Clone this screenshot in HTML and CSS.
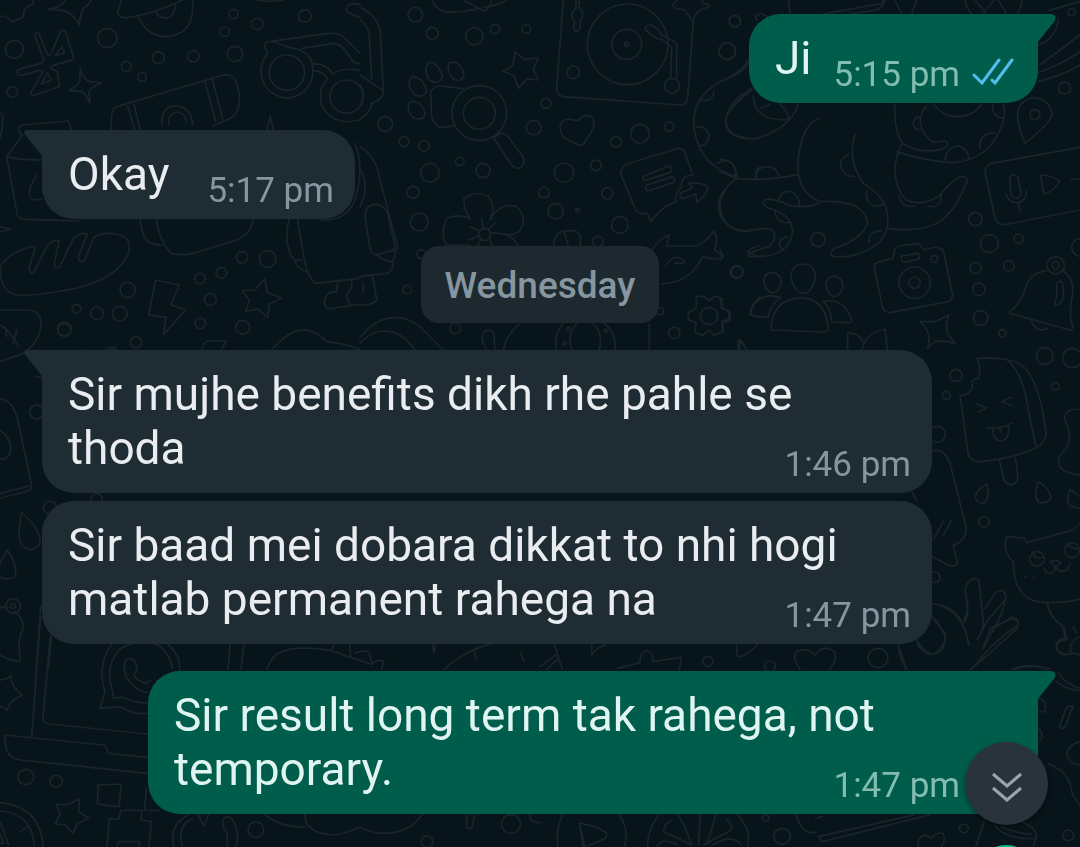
FILE: index.html
```html
<!DOCTYPE html>
<html lang="en">
<head>
<meta charset="utf-8">
<meta name="viewport" content="width=device-width, initial-scale=1">
<title>Chat</title>
<link rel="stylesheet" href="styles.css">
</head>
<body>
<svg class="wallpaper" viewBox="0 0 1080 847" preserveAspectRatio="xMinYMin slice" aria-hidden="true">
  <!-- top left -->
  <g transform="scale(.3333)">
    <path d="M0 52Q14 44 20 52Q36 72 48 60L72 50Q68 28 82 20L100 12V0M145 28Q190 20 196 0M145 28Q200 28 215 45Q232 60 238 75Q240 30 262 15L275 0M365 0L353 35Q355 55 380 53Q450 45 548 0M415 50Q440 110 500 110Q575 105 578 25V0M468 38Q480 56 500 54Q525 50 526 15M770 0Q820 8 850 0M1080 14Q1045 6 1038 26Q1040 40 1080 52"/>
    <path d="M115 97L143 163Q150 170 155 158L180 97Q190 85 197 95L220 170Q222 182 208 182L158 197Q148 202 158 208L172 215L178 258Q176 264 165 264L103 286Q90 287 94 275L128 216Q128 208 115 212L66 226Q50 226 52 213L60 207L120 190Q135 186 130 176L105 107Q104 95 115 97ZM187 140L193 160L166 166ZM142 218L153 240L124 252ZM241 207Q250 240 268 244L306 249Q270 263 267 275L270 309Q255 275 241 274L206 272Q235 255 239 246Z"/>
    <circle cx="43" cy="148" r="27"/><circle cx="322" cy="114" r="29"/><circle cx="700" cy="42" r="14"/><circle cx="772" cy="72" r="17"/><circle cx="674" cy="95" r="14"/><circle cx="915" cy="48" r="19"/><circle cx="705" cy="162" r="23"/><circle cx="580" cy="169" r="17"/><circle cx="475" cy="173" r="18"/><circle cx="379" cy="199" r="15"/><circle cx="426" cy="231" r="13"/><circle cx="37" cy="276" r="16"/>
    <path d="M335 391Q330 325 350 320L660 228Q700 215 712 255Q730 320 700 350L640 378M383 318L405 391M402 312L421 391M614 244L648 366M637 238L668 357M487 375Q480 318 530 317Q575 325 578 375M507 375Q502 340 532 336Q560 340 558 368M800 391L811 350L820 391"/>
    <circle cx="861" cy="218" r="53"/><path d="M803 160L795 143Q790 128 805 125L985 100Q1020 98 1035 115L1080 160M905 145L1000 130Q1015 130 1030 145L1060 185L1080 192M803 160A78 80 0 1 0 937 195Q930 150 870 143L818 124M937 192Q980 190 998 222M938 212Q965 210 984 238M998 222Q1030 200 1080 212M984 238Q955 260 964 310Q980 360 1040 366L1080 360"/><circle cx="1040" cy="290" r="50"/>
    <path d="M0 340L8 342Q8 390 0 415M62 405L55 383L65 375L205 363L214 391M68 405L20 470L52 645Q58 658 75 658L240 663M20 470Q60 480 125 480M110 525Q80 575 90 590Q100 605 125 598M0 680L30 688L0 696"/>
    <path d="M0 800Q25 760 85 742Q105 735 105 745L87 805Q90 825 103 815L140 740Q150 722 178 720L163 790Q165 810 180 800L220 715Q240 697 262 702L235 770Q240 795 255 780L280 715Q300 695 345 702Q400 710 385 760Q360 830 230 865Q100 890 50 885Q0 875 0 800M420 655Q425 700 440 722Q455 735 485 735M468 655Q480 730 515 760Q540 768 580 760L710 720Q755 700 760 655M868 655Q850 720 875 770Q885 785 905 780M892 655L915 790Q925 830 945 850L1080 835M885 778Q885 805 920 815M980 884Q1000 870 1010 878Q1010 845 1020 840M980 884Q970 900 975 917Q985 930 1000 925L1080 912M1055 840Q1058 870 1045 875Q1035 900 1055 915M1065 430Q1095 500 1065 600Q1040 665 960 660"/>
    <circle cx="726" cy="772" r="17"/><circle cx="803" cy="777" r="25"/><circle cx="664" cy="819" r="16"/><circle cx="600" cy="836" r="16"/><circle cx="383" cy="870" r="23"/><circle cx="631" cy="898" r="18"/><circle cx="229" cy="926" r="13"/><circle cx="291" cy="940" r="19"/><circle cx="359" cy="941" r="22"/><circle cx="193" cy="987" r="21"/><circle cx="601" cy="970" r="16"/><circle cx="728" cy="982" r="21"/><circle cx="408" cy="1027" r="17"/>
    <path d="M467 840L538 855L513 914L557 931L490 1004L498 952L446 945ZM794 837L802 877L845 895L808 912L803 952L773 927L738 934L748 900L727 872L765 870ZM0 930H90Q130 940 122 985Q110 1040 60 1064L0 1085M0 975Q30 990 55 1040M20 1010L15 980M40 1030L50 990M605 1050Q610 1025 625 1023H678L665 1050M815 1050Q870 985 920 990Q960 1000 980 1025Q1040 1030 1080 1050M240 1050Q300 1080 345 1040"/>
  </g>
  <!-- top centre -->
  <g transform="translate(360 0) scale(.3333)">
    <path d="M0 22Q60 50 62 110L70 280Q65 300 45 305L35 310Q35 335 0 358M0 60Q25 75 28 110L35 240M0 225L70 272M0 255Q20 285 0 315M215 0Q230 30 255 35Q310 40 355 25M310 0L370 33Q390 30 395 0M370 22Q420 15 440 0M610 0L590 265Q590 285 610 290L960 315Q980 315 983 295L1000 65M640 85L650 95L660 85V65L668 50V35L658 25V5H648V25L636 38V52L645 65ZM952 0L940 12Q935 22 950 26L975 30L998 65Q1005 40 1020 30L1048 20Q1048 12 1030 10L1025 0M858 92Q850 75 875 75Q895 85 905 105L945 125Q953 130 950 145V235M860 92Q880 115 910 120L935 143L932 238"/>
    <circle cx="803" cy="133" r="121"/><circle cx="800" cy="133" r="45"/><circle cx="800" cy="133" r="6"/><circle cx="936" cy="257" r="22"/><circle cx="640" cy="217" r="19"/><circle cx="166" cy="44" r="22"/><circle cx="217" cy="100" r="18"/><circle cx="343" cy="109" r="26"/><circle cx="405" cy="87" r="14"/><circle cx="499" cy="87" r="13"/><circle cx="1125" cy="63" r="17"/><circle cx="1102" cy="153" r="25"/>
    <path d="M465 155L493 178L535 174L520 208L535 240L500 237L475 265L463 228L428 213L458 198ZM205 188Q225 180 245 220Q250 245 225 247Q200 245 197 205ZM270 188Q300 178 312 225Q305 250 280 237Q255 205 270 188ZM155 230Q190 230 200 275Q190 295 165 285Q135 255 155 230ZM150 305Q185 300 195 340Q190 365 160 353Q135 330 150 305ZM310 265L235 258Q212 262 212 285L215 350Q225 385 255 382L280 376M405 420L455 495Q470 512 485 500Q500 485 485 465L440 405Q425 395 410 407Q400 410 405 420M600 380Q605 355 630 358Q645 360 655 362Q670 340 695 350Q710 370 695 395L670 432Q660 440 645 430L615 415Q600 400 600 380Z"/>
    <circle cx="358" cy="339" r="82"/><circle cx="358" cy="340" r="48"/><circle cx="76" cy="372" r="22"/><circle cx="132" cy="425" r="15"/><circle cx="192" cy="438" r="16"/><circle cx="299" cy="484" r="13"/><circle cx="210" cy="518" r="28"/><circle cx="369" cy="512" r="21"/><circle cx="521" cy="383" r="22"/><circle cx="558" cy="310" r="15"/><circle cx="612" cy="518" r="29"/><circle cx="708" cy="496" r="16"/><circle cx="768" cy="425" r="16"/><circle cx="840" cy="401" r="28"/><circle cx="927" cy="380" r="14"/><circle cx="159" cy="577" r="18"/><circle cx="178" cy="666" r="27"/><circle cx="552" cy="578" r="16"/><circle cx="587" cy="634" r="23"/><circle cx="652" cy="630" r="5"/><circle cx="742" cy="580" r="17"/><circle cx="780" cy="675" r="25"/><circle cx="714" cy="725" r="16"/><circle cx="183" cy="762" r="13"/><circle cx="142" cy="869" r="13"/><circle cx="285" cy="985" r="16"/><circle cx="1131" cy="816" r="17"/><circle cx="943" cy="999" r="17"/><circle cx="900" cy="934" r="11"/>
    <path d="M330 655Q310 630 312 595Q350 570 385 588Q410 620 390 660Q420 605 470 620Q505 655 480 690Q460 710 430 702Q460 710 475 738M330 655Q290 640 260 655Q240 700 258 735H330M365 655L370 685M330 680L358 693M325 720L355 708M350 740L365 718M398 740L388 715M430 702L392 698M405 670L385 688"/><circle cx="374" cy="703" r="18"/>
    <path d="M782 520Q785 500 800 492L955 445Q970 445 976 460L998 525L975 530Q962 545 965 560Q945 580 948 605Q905 620 873 664L863 640Q835 645 825 625ZM853 528L928 498Q942 505 930 518L855 542Q842 538 853 528ZM860 555L938 530Q952 540 938 548L868 572Q850 570 860 555ZM962 580L998 563L985 550Q1015 545 1046 560Q1040 585 1010 608L1008 582L970 596Q955 592 962 580Z"/>
    <path d="M1170 170Q1165 215 1090 240Q990 290 1003 390Q1020 500 1130 530M1020 300Q1060 310 1062 270M1010 380Q1045 380 1047 410Q1040 440 1018 437M1070 490Q1120 465 1130 525M1130 535Q1060 585 1080 645Q1100 690 1170 695M1175 270Q1110 320 1098 355Q1090 410 1170 415M1195 540Q1180 530 1195 500"/>
    <path d="M875 750Q900 715 927 705Q925 725 920 738H1010Q1030 735 1062 693Q1075 710 1065 750L1090 770Q1060 785 1030 768Q990 850 905 852M918 795Q945 755 975 785Q965 795 945 788M582 738Q580 690 630 692Q670 690 660 738M612 695L625 738M0 440Q50 470 60 540L113 740Q110 755 103 750Q110 770 95 785Q70 785 48 760M0 505Q30 560 0 620M15 650Q15 615 45 613Q75 615 82 640L105 740Q100 755 80 755L50 765Q35 765 30 745ZM100 785Q100 815 80 820L0 830M38 830L50 900Q45 910 30 912L0 916M10 850V875M0 1012Q50 950 110 953Q150 955 180 980L250 1050M0 1030Q40 985 90 995Q130 1000 165 1050M370 1000Q385 980 402 1000L405 1050M370 1000Q360 1025 382 1050M430 1050Q440 1000 480 972M590 1050Q580 1000 610 972M735 972Q770 1000 765 1050M635 1050Q620 1000 650 972M700 972Q730 1000 718 1050M868 972V1050M1163 755Q1180 740 1200 738M1163 755L1200 772M1170 945Q1170 915 1200 892M1170 945L1200 952M1135 1050V1020Q1145 1015 1160 1050"/>
    <path d="M1010 905L1008 890L1030 888L1048 902L1065 888L1088 895L1085 922L1107 935V957L1086 965L1088 995L1062 1006L1047 990L1028 1007L1005 997L1008 968L985 958V938L1008 925Z"/><circle cx="1047" cy="948" r="26"/><circle cx="625" cy="987" r="5"/><circle cx="737" cy="992" r="5"/><circle cx="614" cy="1030" r="5"/>
  </g>
  <!-- top right -->
  <g transform="translate(720 0) scale(.3333)">
    <path d="M205 0L210 42M310 42L485 10L490 0M390 42L470 30Q490 20 495 0M525 0L545 42M590 0L575 42M735 0Q740 25 755 42M765 0L800 42M785 42L825 0M835 0L860 42M905 0Q905 25 890 42M985 32L1080 5M1015 55Q1010 115 955 135M950 220Q1030 190 1080 155M955 245Q1030 225 1080 195M960 195L1080 105M0 245Q70 215 83 180M110 60Q100 45 125 40L145 52M95 265Q20 310 17 365Q30 420 100 417Q210 390 235 312M100 285Q100 360 195 360L208 355Q200 330 180 312M120 325Q140 320 150 312"/>
    <path d="M298 355Q245 375 235 475Q225 575 300 605Q280 625 215 618Q150 590 135 600Q120 610 145 625Q210 640 218 690Q215 755 140 768L90 770Q75 765 100 755L145 740Q175 720 158 690Q140 680 70 695Q0 685 0 610Q10 560 50 535M50 535L0 515M50 535Q120 545 235 524M105 535Q110 500 140 500Q170 500 177 528M0 478Q50 480 47 530M175 600Q185 570 215 575Q240 590 238 618M165 635Q165 670 215 668M205 710Q175 715 178 735L185 748M300 605Q350 600 400 615Q445 640 442 670Q430 715 345 745Q320 765 345 770Q420 775 480 725Q510 690 502 640Q495 590 430 550Q380 480 405 402M385 465Q360 475 362 500Q370 530 405 530M440 570Q435 610 465 618Q480 620 490 612M448 728Q440 695 485 692M502 685Q600 700 660 665Q700 635 720 590L742 545Q740 525 720 530Q690 545 655 590Q600 620 560 600Q525 570 525 500Q530 460 548 430Q520 390 525 312M537 585Q540 625 585 618M627 618Q660 630 665 582M530 455Q620 485 700 488Q800 480 840 390Q860 350 850 312M675 480Q680 440 715 438Q745 445 748 480M548 430Q590 460 660 450Q690 440 680 425Q670 420 640 428Q605 405 600 360Q605 330 620 318M603 350Q580 350 580 375Q585 390 605 390M640 312Q670 350 710 350Q760 350 785 312M780 445Q775 400 825 398M818 312Q815 350 848 355"/>
    <path d="M915 430Q890 370 893 335Q905 295 945 293Q990 300 997 345Q985 375 915 430ZM1080 442L815 490Q792 500 796 520L825 655Q832 675 855 674L1080 630M870 530Q880 520 893 530L903 580Q900 595 890 595Q875 592 872 580ZM858 580Q865 610 895 608Q920 600 920 572M895 608L900 634M962 525Q995 525 1020 545Q1000 575 972 583ZM1052 537H1080"/>
    <circle cx="945" cy="344" r="15"/><circle cx="1055" cy="37" r="11"/><circle cx="44" cy="64" r="17"/><circle cx="22" cy="154" r="25"/><circle cx="1034" cy="264" r="18"/><circle cx="294" cy="719" r="21"/><circle cx="766" cy="657" r="20"/><circle cx="808" cy="731" r="27"/><circle cx="896" cy="716" r="14"/><circle cx="867" cy="798" r="16"/><circle cx="767" cy="804" r="17"/><circle cx="777" cy="868" r="19"/><circle cx="782" cy="954" r="22"/><circle cx="847" cy="1000" r="11"/><circle cx="1082" cy="742" r="27"/><circle cx="50" cy="816" r="19"/><circle cx="1007" cy="796" r="26"/><circle cx="1007" cy="796" r="11"/>
    <path d="M463 800Q465 788 480 785L520 775Q522 740 535 738L595 730L612 750Q650 735 670 750L698 885Q698 900 685 905L510 938Q490 935 487 920ZM545 768L595 760Q602 770 595 777L553 787Q543 785 545 768Z"/><circle cx="584" cy="848" r="47"/><circle cx="584" cy="848" r="17"/><circle cx="643" cy="777" r="10"/>
    <path d="M213 830Q215 792 250 792Q288 795 286 835Q275 880 248 880Q220 875 213 830ZM131 845Q132 817 158 817Q185 822 184 850Q175 880 155 878Q135 870 131 845ZM317 855Q320 830 345 828Q370 835 368 862Q360 890 342 890Q325 885 317 855ZM153 990Q155 900 240 893Q320 895 325 990Q320 998 300 996L165 990ZM92 940Q100 895 150 887L182 892Q150 915 145 952L98 948ZM310 905Q370 890 395 960Q395 970 380 968L335 966Q335 930 310 905M600 965L645 965L687 945Q670 985 690 1010L705 1030Q670 1020 645 1025L622 1045Q640 1000 600 965ZM383 1050V998Q420 1000 432 1030Q450 995 495 987L502 1050M432 1030L425 1050M980 812Q925 820 915 870Q900 915 868 935Q870 945 880 943L1050 990Q1060 990 1058 975Q1045 960 1058 880Q1060 825 1025 812M1010 850Q1028 830 1030 870Q1035 910 1010 915Q1000 915 1010 890ZM935 965Q950 1000 985 985M0 895L5 925L30 935V960L8 970V1000M0 750L10 770L0 780M60 1050V1020L80 1050"/>
  </g>
  <!-- right side -->
  <g transform="translate(900 330) scale(.3333)">
    <path d="M230 85Q245 105 235 145Q210 145 218 170Q210 195 180 197L205 375Q215 395 240 395Q340 385 405 355Q440 335 438 310Q420 150 365 105Q330 80 230 85ZM320 88Q370 130 385 240L408 350M298 390L312 450Q330 475 350 455Q358 440 345 382M230 222L260 233L235 246M332 202L305 215L335 227M258 292L275 295Q310 295 335 280M278 297Q280 335 305 333Q330 325 325 290M300 297L303 308M260 462Q235 475 225 500Q230 520 250 520Q270 510 262 465ZM415 455Q400 500 415 515Q430 525 450 510Q460 485 415 455ZM510 478Q495 520 515 530L540 535M510 478L540 500M540 240Q500 230 493 265Q520 320 500 355Q465 385 480 410Q490 430 540 435"/>
    <circle cx="168" cy="136" r="18"/><circle cx="139" cy="196" r="12"/><circle cx="112" cy="313" r="24"/><circle cx="434" cy="78" r="25"/><circle cx="517" cy="84" r="29"/><circle cx="467" cy="169" r="11"/><circle cx="252" cy="575" r="16"/><circle cx="307" cy="10" r="11"/><circle cx="104" cy="742" r="16"/>
    <path d="M97 362Q135 355 150 400L198 590Q200 635 160 645L172 700Q165 712 150 708L97 680M100 628L130 575M130 618L153 572M50 512L35 485M520 600L380 638L375 625L320 620Q305 665 340 695Q340 790 400 812Q450 825 540 808M520 600L540 580M440 820Q450 860 490 890L495 925Q460 930 472 960Q485 985 515 968L540 975M520 890L530 910M540 920Q500 940 515 968M375 740H377M397 741H399M453 695L470 690L482 700L466 712ZM466 712Q462 735 440 730L432 715M466 712Q480 730 500 720L512 700M400 670Q405 690 428 682M505 640Q510 660 535 655"/><circle cx="411" cy="687" r="22"/><circle cx="516" cy="661" r="22"/>
    <path d="M97 820Q190 840 207 945M97 860L135 910Q140 970 95 972Q70 965 50 930M195 878Q205 850 203 830L195 780Q205 740 235 748L240 780L250 880Q245 910 232 928M255 835L285 790Q310 770 318 800Q310 850 280 900L250 955M282 895L335 862Q360 865 353 885Q290 930 255 970L215 1018M0 960L20 1018M340 1018Q400 1000 450 1018M475 1030Q500 1065 540 1075M350 1140L340 1160"/>
  </g>
  <!-- left side -->
  <g transform="translate(0 330) scale(.3333)">
    <path d="M0 205Q40 215 52 265L95 465Q95 480 80 484L0 505M0 490L88 468M0 300Q40 330 30 370Q20 390 0 387M65 548Q50 620 65 645Q95 675 120 640Q125 600 65 548ZM22 660Q-15 715 0 740Q20 755 45 740Q55 710 22 660M0 832H25M45 845Q75 870 68 900Q50 930 62 992Q40 998 0 975M122 830L108 1020M155 915L145 1020"/>
    <circle cx="39" cy="828" r="22"/><circle cx="39" cy="828" r="7"/><circle cx="110" cy="246" r="21"/><circle cx="150" cy="532" r="19"/><circle cx="193" cy="0" r="19"/><circle cx="290" cy="508" r="17"/><path d="M315 60Q330 45 350 60M105 138L125 145"/>
  </g>
  <!-- bottom left -->
  <g transform="translate(0 600) scale(.3444 .3333)">
    <path d="M118 50L92 410M146 110L125 350Q125 370 142 372L428 402M15 405L300 435Q310 440 315 460L428 472M15 405Q10 475 60 480L428 520M0 240Q30 235 32 225Q30 260 65 285Q30 300 20 330L0 318M290 325L305 275Q280 200 325 130M290 325L350 320Q385 345 428 340M485 130Q525 165 522 210M330 295L325 265Q305 200 345 150Q400 110 460 135Q495 165 500 205M330 295L355 292Q390 310 428 308M365 180Q380 170 393 185L398 210L388 225Q400 245 425 250L438 240M365 180Q350 220 385 255Q405 275 428 278M668 130L662 208M708 130L700 208M775 208Q790 150 860 145Q950 140 1010 170Q1075 190 1080 195M960 150L972 130M1015 130L1018 170M1030 160Q1060 145 1072 160L1080 190Q1100 175 1115 185L1108 208M1255 130L1260 158L1265 130M1290 208Q1350 150 1430 130M1375 150L1385 180M1510 155L1522 185"/>
    <circle cx="75" cy="531" r="23"/><circle cx="163" cy="544" r="18"/><circle cx="743" cy="689" r="23"/><circle cx="1484" cy="672" r="28"/><circle cx="1240" cy="725" r="17"/>
    <path d="M285 555L352 552L346 620L283 612ZM425 565L420 630L460 632M350 632L412 630L410 660L440 665L432 741M350 632L345 658L318 655L310 741M340 741L345 725H405V741M231 596L228 635L258 655L225 670L212 700L190 675L160 672L175 640L163 612L195 615ZM0 608Q120 620 125 741M0 633Q95 640 100 741M60 695L82 678M0 665L25 735M0 700L10 730H0M505 741Q490 675 545 645M530 741Q510 680 560 655M575 645L592 678L605 645M650 655Q670 640 685 680Q695 710 685 741M650 655Q640 675 660 700V741M770 645Q820 685 885 680M885 645Q885 700 970 705Q1010 700 1045 680Q1100 715 1170 690Q1200 680 1225 645M1355 645V685H1370L1378 645M1538 645Q1540 670 1568 668"/>
  </g>
  <!-- bottom right -->
  <g transform="translate(540 600) scale(.3444 .3333)">
    <path d="M40 130L65 208M0 200L45 165M20 208L50 178M150 130V165Q165 140 190 135M225 205L290 188Q290 155 310 152Q330 160 328 185L410 172L405 208M570 130L573 170Q600 170 630 135M755 208Q730 170 745 155Q775 140 798 165Q825 130 855 155Q865 180 840 208M1040 135Q1045 180 1065 208M1095 130Q1115 170 1145 162Q1180 140 1175 105L1150 60M1160 15Q1230 30 1243 130M1240 0Q1245 40 1230 60M1270 118L1300 60L1350 0M1285 145L1310 85L1370 55Q1395 60 1385 85L1300 165L1250 208M1370 208Q1430 185 1470 208M1498 245Q1530 270 1568 272M1475 15Q1480 55 1520 80L1530 120Q1500 120 1500 145Q1510 170 1545 160M1450 295Q1475 305 1465 335H1450M1450 385Q1465 410 1450 425M1530 320L1548 318L1525 380Q1515 390 1508 380ZM1568 425Q1530 435 1530 465Q1540 495 1568 495M1475 490L1510 510Q1540 530 1545 580L1568 620"/>
    <circle cx="487" cy="184" r="15"/><circle cx="668" cy="199" r="16"/><circle cx="981" cy="174" r="29"/><circle cx="703" cy="709" r="24"/><circle cx="655" cy="653" r="10"/><circle cx="1231" cy="685" r="13"/><circle cx="1534" cy="706" r="16"/>
    <path d="M65 645Q45 690 52 741M230 645Q260 690 245 741M115 670Q160 675 195 700L190 715Q160 730 130 741ZM115 670L125 741M345 645Q310 690 313 741M575 645Q615 690 603 741M380 660Q355 680 360 695L440 735Q420 670 400 645M460 735L465 645M475 735L555 690Q560 675 540 655M485 735L510 645M340 741Q350 710 400 735M500 735Q560 700 585 735M745 645Q755 690 785 698H800M800 655L820 650M808 710L1085 645M808 710L820 725L1130 645M1100 741Q1090 710 1120 705L1135 715Q1150 695 1170 700Q1180 720 1165 741M1290 665L1265 741M1320 675Q1350 720 1440 715Q1450 690 1400 665M1340 680Q1380 700 1425 703M1440 715L1432 741"/>
  </g>
</svg>

<main class="chat">
  <article class="bubble bubble--out bubble--tail">
    <svg class="tail" viewBox="0 0 19 30" aria-hidden="true"><path d="M0 0H14Q21 1 17 8L0 29Z"/></svg>
    <p class="text">Ji</p>
    <div class="meta"><time>5:15 pm</time>
      <svg class="ticks" viewBox="0 0 42 34" role="img" aria-label="Read"><path d="M2 17L10 25L27 2M20 22L23 25L40 2"/></svg>
    </div>
  </article>

  <article class="bubble bubble--in bubble--tail">
    <svg class="tail" viewBox="0 0 19 30" aria-hidden="true"><path d="M19 0H3Q-2 1 2 6L19 27Z"/></svg>
    <p class="text">Okay</p>
    <div class="meta"><time>5:17 pm</time></div>
  </article>

  <h2 class="day">Wednesday</h2>

  <article class="bubble bubble--in bubble--tail bubble--long">
    <svg class="tail" viewBox="0 0 19 30" aria-hidden="true"><path d="M19 0H3Q-2 1 2 6L19 27Z"/></svg>
    <p class="text">Sir mujhe benefits dikh rhe pahle se<br>thoda</p>
    <div class="meta"><time>1:46 pm</time></div>
  </article>

  <article class="bubble bubble--in bubble--long bubble--follow">
    <p class="text">Sir baad mei dobara dikkat to nhi hogi<br>matlab permanent rahega na</p>
    <div class="meta"><time>1:47 pm</time></div>
  </article>

  <article class="bubble bubble--out bubble--tail bubble--long">
    <svg class="tail" viewBox="0 0 19 30" aria-hidden="true"><path d="M0 0H14Q21 1 17 8L0 29Z"/></svg>
    <p class="text">Sir result long term tak rahega, not<br>temporary.</p>
    <div class="meta"><time>1:47 pm</time>
      <svg class="ticks" viewBox="0 0 42 34" role="img" aria-label="Read"><path d="M2 17L10 25L27 2M20 22L23 25L40 2"/></svg>
    </div>
  </article>
</main>

<button class="jump" type="button" aria-label="Scroll to latest">
  <svg viewBox="0 0 32 32" aria-hidden="true"><path d="M2 3L16 15L30 3M2 17L16 29L30 17"/></svg>
</button>
<span class="pill"></span>
</body>
</html>
```

FILE: styles.css
```css
* {
  box-sizing: border-box;
}

body {
  margin: 0;
  min-height: 100vh;
  overflow: hidden;
  background: #07141a;
  font-family: Roboto, "Liberation Sans", sans-serif;
}

.wallpaper {
  position: fixed;
  inset: 0;
  width: 100%;
  height: 100%;
  fill: none;
  stroke: #18252a;
  stroke-width: 5;
  stroke-linecap: round;
  stroke-linejoin: round;
}

.chat {
  position: relative;
  display: flex;
  flex-direction: column;
  align-items: flex-start;
  gap: 27px;
  padding: 14px 42px 34px;
}

.bubble {
  position: relative;
  display: flex;
  align-items: flex-end;
  gap: 38px;
  max-width: 890px;
  padding: 17px 21px 18px 26px;
  border-radius: 32px;
}

.bubble--in {
  background: #1f2c34;
  color: #e9edf0;
}

.bubble--out {
  align-self: flex-end;
  gap: 22px;
  padding-right: 24px;
  background: #005d4b;
  color: #e0f5f1;
}

.bubble--in.bubble--tail {
  border-top-left-radius: 0;
}

.bubble--out.bubble--tail {
  border-top-right-radius: 0;
}

.bubble--long {
  display: grid;
  width: 100%;
}

.bubble--long .text,
.bubble--long .meta {
  grid-area: 1 / 1;
}

.bubble--follow {
  margin-top: -19px;
}

.tail {
  position: absolute;
  top: 0;
  width: 19px;
  height: 30px;
}

.bubble--in .tail {
  right: 100%;
  margin-right: -1px;
  fill: #1f2c34;
}

.bubble--out .tail {
  left: 100%;
  margin-left: -1px;
  fill: #005d4b;
}

.text {
  margin: 0;
  font-size: 46px;
  line-height: 54px;
}

.meta {
  display: flex;
  align-items: center;
  justify-self: end;
  gap: 12px;
  margin-bottom: -11px;
  color: #8696a0;
  font-size: 35px;
  line-height: 42px;
}

.bubble--out .meta {
  color: #83bdb0;
}

.ticks {
  width: 42px;
  height: 34px;
  fill: none;
  stroke: #53bdeb;
  stroke-width: 3;
  stroke-linecap: round;
}

.day {
  align-self: center;
  margin: 0;
  padding: 18px 24px 16px;
  border-radius: 18px;
  background: #1d282f;
  color: #8696a0;
  font-size: 37px;
  font-weight: 500;
  line-height: 43px;
}

.jump {
  position: fixed;
  right: 32px;
  bottom: 22px;
  display: grid;
  place-items: center;
  width: 83px;
  height: 83px;
  padding: 6px 0 0;
  border: 0;
  border-radius: 50%;
  background: #29333b;
  box-shadow: 0 2px 5px rgba(0, 0, 0, 0.4);
}

.jump svg {
  width: 32px;
  height: 32px;
  fill: none;
  stroke: #9aa6ae;
  stroke-width: 3;
}

.pill {
  position: fixed;
  right: 44px;
  bottom: -58px;
  width: 60px;
  height: 60px;
  border-radius: 50%;
  background: #06b88c;
}
```
